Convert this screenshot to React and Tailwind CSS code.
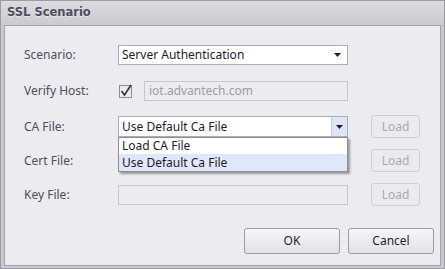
// App.jsx - SSL Scenario dialog

import React from 'react';

const font = { fontFamily: '"Noto Sans", "Liberation Sans", sans-serif' };

const Arrow = () => (
  <svg width="7" height="4" viewBox="0 0 7 4">
    <path d="M0 0 H7 L3.5 4 Z" fill="#1e1e2e" />
  </svg>
);

const LoadButton = () => (
  <button
    disabled
    className="w-[49px] h-[23px] rounded-[3px] border border-[#cfcfd5] bg-[#ebebef] text-[12px] text-[#a9a9b2] flex items-center justify-center"
  >
    Load
  </button>
);

const Label = ({ children }) => (
  <div className="w-[94px] text-[12px] text-[#4e4e5e]">{children}</div>
);

const DialogButton = ({ children, width }) => (
  <button
    className={`${width} h-[26px] rounded-[3px] border border-[#9c9ca6] bg-gradient-to-b from-[#f6f6f8] to-[#e2e2e7] text-[12px] text-[#1e1e2e] flex items-center justify-center`}
  >
    {children}
  </button>
);

export default function App() {
  return (
    <div
      className="w-[445px] h-[269px] border border-[#9c9ca6] bg-[#c9c9cf] flex flex-col"
      style={font}
    >
      {/* 标题栏 */}
      <div className="h-[24px] bg-gradient-to-b from-[#dcdce0] to-[#cacad0] flex items-center pl-[6px]">
        <span
          className="font-bold text-[#4d4d60] [text-shadow:0_1px_0_rgba(255,255,255,0.5)]"
          style={{ fontFamily: '"DejaVu Sans", sans-serif', fontSize: '11.5px' }}
        >
          SSL Scenario
        </span>
      </div>

      {/* 主面板 */}
      <div className="relative flex-1 mx-[3px] mb-[2px] border border-[#a2a2aa] bg-[#ebebf0] flex flex-col pl-[19px] pt-[11px]">
        {/* Scenario */}
        <div className="h-[36px] flex items-center">
          <Label>Scenario:</Label>
          <div className="w-[230px] h-[20px] border border-[#acacb4] bg-white flex items-center justify-between pl-[3px] pr-[6px]">
            <span className="text-[12px] text-[#1b1b2b]">Server Authentication</span>
            <Arrow />
          </div>
        </div>

        {/* Verify Host */}
        <div className="h-[36px] flex items-center">
          <Label>Verify Host:</Label>
          <div className="w-[26px] flex items-center pl-[1px]">
            <svg width="14" height="14" viewBox="0 0 14 14">
              <rect x="0.5" y="1.5" width="12" height="12" fill="none" stroke="#8c8c96" />
              <path d="M2.5 7 L5.5 11 L12 1" fill="none" stroke="#3a3a4a" strokeWidth="1.8" />
            </svg>
          </div>
          <div className="w-[204px] h-[20px] border border-[#c6c6cd] bg-[#ebebf0] flex items-center pl-[4px]">
            <span className="text-[12px] text-[#9c9ca8]">iot.advantech.com</span>
          </div>
        </div>

        {/* CA File */}
        <div className="h-[35px] flex items-center">
          <Label>CA File:</Label>
          <div className="w-[230px] h-[21px] border border-[#acacb4] bg-white flex items-center justify-between pl-[3px]">
            <span className="text-[12px] text-[#1b1b2b]">Use Default Ca File</span>
            <div className="w-[16px] h-full bg-[#dde5f6] border-l border-[#c4cde0] flex items-center justify-center">
              <Arrow />
            </div>
          </div>
          <div className="ml-[23px]">
            <LoadButton />
          </div>
        </div>

        {/* Cert File */}
        <div className="h-[33px] flex items-center">
          <Label>Cert File:</Label>
          <div className="w-[230px] h-[20px] border border-[#c6c6cd] bg-[#ebebf0]" />
          <div className="ml-[23px]">
            <LoadButton />
          </div>
        </div>

        {/* Key File */}
        <div className="h-[35px] flex items-center">
          <Label>Key File:</Label>
          <div className="w-[230px] h-[20px] border border-[#c6c6cd] bg-[#ebebf0]" />
          <div className="ml-[23px]">
            <LoadButton />
          </div>
        </div>

        {/* 底部按钮 */}
        <div className="flex-1 flex items-start justify-end pt-[16px] pr-[6px] gap-[8px]">
          <DialogButton width="w-[96px]">OK</DialogButton>
          <DialogButton width="w-[86px]">Cancel</DialogButton>
        </div>

        {/* 下拉列表 */}
        <div className="absolute left-[113px] top-[111px] w-[230px] border border-[#8e8e9a] bg-white shadow-[2px_2px_2px_rgba(0,0,0,0.35)] flex flex-col">
          <div className="h-[16px] flex items-center pl-[3px] text-[12px] text-[#1b1b2b]">
            Load CA File
          </div>
          <div className="h-[17px] flex items-center pl-[3px] text-[12px] text-[#1b1b2b] bg-[#dfe7f8]">
            Use Default Ca File
          </div>
        </div>
      </div>
    </div>
  );
}
